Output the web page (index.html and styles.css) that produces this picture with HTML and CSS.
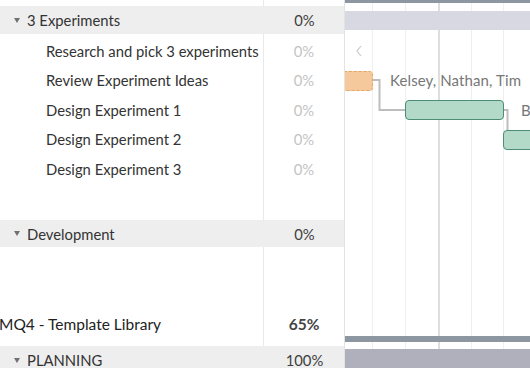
FILE: index.html
```html
<!DOCTYPE html>
<html>
<head>
    <title>Gantt - MQ4 Template Library</title>
    <link rel="stylesheet" href="styles.css">
</head>
<body>
  <div class="gantt">
      <div class="table">
          <div class="row spacer-top"><div class="name"></div><div class="pct"></div></div>
          <div class="row group">
              <div class="name"><span class="caret"></span>3 Experiments</div>
              <div class="pct">0%</div>
          </div>
          <div class="row gap-2"><div class="name"></div><div class="pct"></div></div>
          <div class="row task"><div class="name">Research and pick 3 experiments</div><div class="pct">0%</div></div>
          <div class="row task"><div class="name">Review Experiment Ideas</div><div class="pct">0%</div></div>
          <div class="row task"><div class="name">Design Experiment 1</div><div class="pct">0%</div></div>
          <div class="row task"><div class="name">Design Experiment 2</div><div class="pct">0%</div></div>
          <div class="row task"><div class="name">Design Experiment 3</div><div class="pct">0%</div></div>
          <div class="row gap-empty"><div class="name"></div><div class="pct"></div></div>
          <div class="row group dev">
              <div class="name"><span class="caret"></span>Development</div>
              <div class="pct">0%</div>
          </div>
          <div class="row gap-big"><div class="name"></div><div class="pct"></div></div>
          <div class="row project">
              <div class="name">MQ4 - Template Library</div>
              <div class="pct">65%</div>
          </div>
          <div class="row gap-8"><div class="name"></div><div class="pct"></div></div>
          <div class="row group">
              <div class="name"><span class="caret"></span>PLANNING</div>
              <div class="pct">100%</div>
          </div>
      </div>

      <div class="timeline">
          <!-- day lines -->
          <div class="vline" style="left: 27px"></div>
          <div class="vline" style="left: 60px"></div>
          <div class="vline week" style="left: 93px"></div>
          <div class="vline" style="left: 126px"></div>
          <div class="vline" style="left: 158px"></div>

          <div class="band top-edge"></div>
          <div class="band group-bar"></div>
          <div class="band project-bar"></div>
          <div class="band planning-bar"></div>

          <svg class="chevron" width="8" height="12" viewBox="0 0 8 12">
              <polyline points="6,1 2,6 6,11" fill="none" stroke="#c9c9c9" stroke-width="1.2"/>
          </svg>

          <svg class="links" width="186" height="368">
              <polyline points="27,80 34.5,80 34.5,110 60,110" fill="none" stroke="#bdbdbd" stroke-width="2"/>
              <polyline points="159,110 162.5,110 162.5,130" fill="none" stroke="#bdbdbd" stroke-width="2"/>
          </svg>

          <div class="bar orange"></div>
          <span class="who who-1">Kelsey, Nathan, Tim</span>
          <div class="bar green g1"></div>
          <span class="who who-2">B</span>
          <div class="bar green g2"></div>
      </div>
  </div>
</body>
</html>
```

FILE: styles.css
```css
  body {
      margin: 0;
      font-family: "Lato", "Open Sans", sans-serif;
      background-color: #fff;
      color: #333;
      overflow: hidden;
  }

  .gantt {
      display: flex;
      width: 530px;
      height: 368px;
      overflow: hidden;
  }

  .table {
      width: 344px;
      flex: none;
  }

  .row {
      display: flex;
      align-items: center;
      font-size: 14.8px;
  }

  .row .name {
      width: 263px;
      height: 100%;
      display: flex;
      align-items: center;
      border-right: 1px solid #e9e9e9;
      white-space: nowrap;
      overflow: hidden;
  }

  .row .pct {
      flex: 1;
      text-align: center;
  }

  .spacer-top { height: 6px; }
  .gap-2 { height: 2px; }
  .gap-empty { height: 36.5px; }
  .gap-big { height: 63px; }
  .gap-8 { height: 8px; }

  .group {
      height: 28px;
      background-color: #eeeeee;
  }

  .group.dev {
      height: 27px;
  }

  .group .name {
      border-right-color: transparent;
      padding-left: 14px;
      width: 250px;
  }

  .group .pct {
      color: #404040;
  }

  .caret {
      width: 0;
      height: 0;
      border-left: 3.5px solid transparent;
      border-right: 3.5px solid transparent;
      border-top: 5px solid #707070;
      margin-right: 7px;
  }

  .task {
      height: 29.5px;
  }

  .task .name {
      padding-left: 46px;
      width: 217px;
  }

  .task .pct {
      color: #c4c4c4;
  }

  .project {
      height: 28px;
      font-size: 15.5px;
  }

  .project .name {
      color: #222;
      margin-left: -1px;
      width: 264px;
  }

  .project .pct {
      color: #444;
      font-weight: bold;
  }

  .timeline {
      position: relative;
      flex: 1;
      border-left: 1px solid #e3e3e3;
      overflow: hidden;
  }

  .vline {
      position: absolute;
      top: 0;
      bottom: 0;
      width: 1px;
      background-color: #efefef;
  }

  .vline.week {
      width: 1.5px;
      background-color: #dedede;
  }

  .band {
      position: absolute;
      left: 0;
      right: 0;
  }

  .top-edge {
      top: 0;
      height: 3px;
      background-color: #8d97a1;
  }

  .group-bar {
      top: 11px;
      height: 19px;
      background-color: #d8d8e2;
  }

  .project-bar {
      top: 336px;
      height: 6px;
      background-color: #8d97a1;
  }

  .planning-bar {
      top: 349px;
      height: 20px;
      background-color: #b0b0bc;
  }

  .chevron {
      position: absolute;
      left: 10px;
      top: 45px;
  }

  .links {
      position: absolute;
      left: 0;
      top: 0;
  }

  .bar {
      position: absolute;
      height: 18px;
      border-radius: 4px;
      box-sizing: content-box;
  }

  .orange {
      left: -10px;
      width: 36px;
      top: 71px;
      background-color: #f6c99c;
      border: 1px dashed #e5a66c;
  }

  .green {
      background-color: #b3dac8;
      border: 1px solid #4d8d75;
  }

  .g1 {
      left: 60px;
      width: 97px;
      top: 100px;
  }

  .g2 {
      left: 158px;
      width: 60px;
      top: 130px;
  }

  .who {
      position: absolute;
      font-size: 15px;
      letter-spacing: 0.1px;
      color: #777;
      white-space: nowrap;
  }

  .who-1 {
      left: 45px;
      top: 71px;
  }

  .who-2 {
      left: 176px;
      top: 101px;
  }
```
